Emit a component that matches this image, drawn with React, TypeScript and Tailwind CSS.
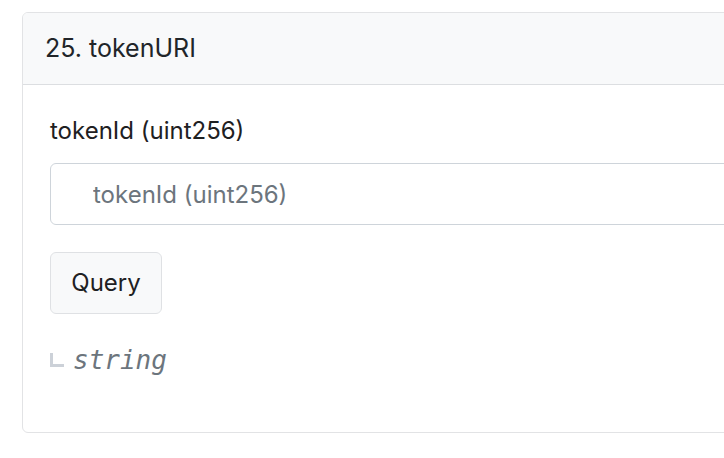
import { FC } from "react";

const sans = { fontFamily: "Inter, 'Liberation Sans', Arial, sans-serif" };

export const ReadFunction: FC = () => {
    return (
        <div className="w-[760px] h-[421px] border border-[#e2e3e5] rounded-[6px] overflow-hidden bg-white">

            {/* タイトル */}
            <div className="h-[72px] bg-[#f8f9fa] border-b border-[#dcdee1] flex items-center pl-[22px] text-[25px] text-[#212529]">
                25. tokenURI
            </div>

            <div className="pl-[27px] pt-[28px]">

                <div className="text-[24px] leading-[36px] text-[#1e2022] mb-[14px]">tokenId (uint256)</div>

                <input
                    className="block w-full h-[62px] border border-[#ced4da] rounded-[6px] pl-[42px] text-[24px] outline-none placeholder:text-[#6c757d]"
                    placeholder="tokenId (uint256)"
                    style={sans}
                />

                <button
                    className="mt-[27px] w-[112px] h-[62px] bg-[#f8f9fa] border border-[#dfe1e4] rounded-[6px] text-[24px] text-[#1e2022]"
                    style={sans}
                >
                    Query
                </button>

                {/* 戻り値 */}
                <div className="flex items-start mt-[28px]">
                    <span className="w-[14px] h-[14px] mt-[11px] border-l-[3px] border-b-[3px] border-[#ccd1d8]"></span>
                    <span
                        className="ml-[9px] text-[26px] leading-[36px] italic text-[#6c757d]"
                        style={{ fontFamily: "'DejaVu Sans Mono', monospace" }}
                    >
                        string
                    </span>
                </div>

            </div>
        </div>
    );
}

export default function App() {
    return (
        <div className="w-[724px] h-[458px] overflow-hidden bg-white pt-[12px] pl-[22px]" style={sans}>
            <ReadFunction />
        </div>
    );
}
